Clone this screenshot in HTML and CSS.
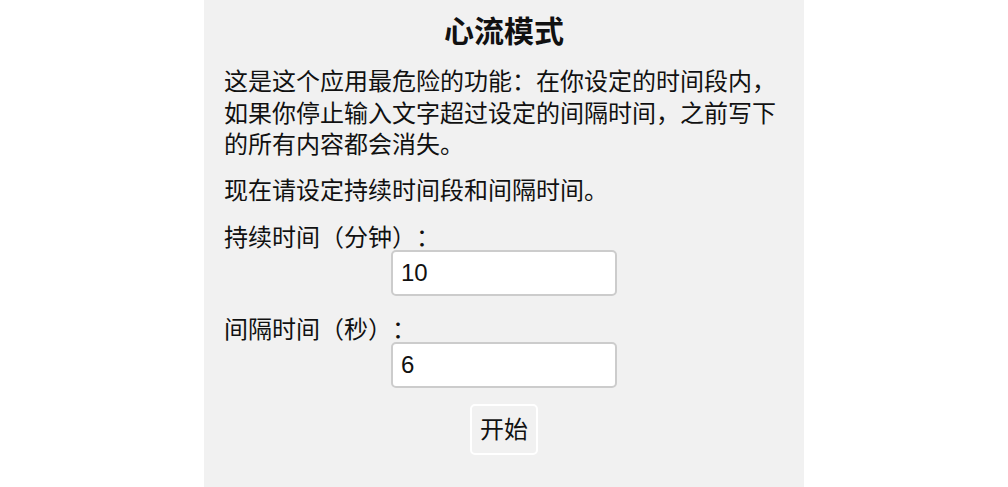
FILE: index.html
```html
<!DOCTYPE html>
<html lang="zh-CN">
<head>
<meta charset="utf-8">
<title>心流模式</title>
<link rel="stylesheet" href="styles.css">
</head>
<body>
<div class="panel">
  <h1 class="title">心流模式</h1>
  <p class="text">这是这个应用最危险的功能：在你设定的时间段内，如果你停止输入文字超过设定的间隔时间，之前写下的所有内容都会消失。</p>
  <p class="text">现在请设定持续时间段和间隔时间。</p>
  <div class="field">
    <label class="label" for="duration">持续时间（分钟）：</label>
    <input class="input" id="duration" type="text" value="10">
  </div>
  <div class="field">
    <label class="label" for="interval">间隔时间（秒）：</label>
    <input class="input" id="interval" type="text" value="6">
  </div>
  <div class="actions">
    <button class="btn" type="button">开始</button>
  </div>
</div>
</body>
</html>
```
FILE: styles.css
```css
html, body {
  margin: 0;
  padding: 0;
  background: #ffffff;
}
body {
  font-family: "Liberation Sans", "Noto Sans CJK SC", sans-serif;
  color: #111111;
  text-spacing-trim: space-all;
}
.panel {
  box-sizing: border-box;
  width: 600px;
  min-height: 100vh;
  margin: 0 auto;
  padding: 12px 20px 0 20px;
  background: #f1f1f1;
}
.title {
  margin: 0;
  font-size: 30px;
  line-height: 40px;
  font-weight: bold;
  text-align: center;
}
.text {
  margin: 14px 0 0 0;
  font-size: 24px;
  line-height: 31.5px;
}
.field {
  margin-top: 20px;
}
.field + .field {
  margin-top: 22px;
}
.label {
  display: block;
  font-size: 24px;
  line-height: 24px;
}
.input {
  display: block;
  box-sizing: border-box;
  width: 226px;
  height: 46px;
  margin: 0 auto;
  padding: 0 8px;
  border: 2px solid #cccccc;
  border-radius: 5px;
  background: #ffffff;
  font-family: "Liberation Sans", sans-serif;
  font-size: 24px;
  color: #111111;
  outline: none;
}
.actions {
  margin-top: 16px;
  text-align: center;
}
.btn {
  box-sizing: border-box;
  padding: 8px 8px;
  border: 2px solid #ffffff;
  border-radius: 5px;
  background: #f1f1f1;
  font-family: "Liberation Sans", "Noto Sans CJK SC", sans-serif;
  font-size: 24px;
  line-height: 31px;
  color: #111111;
}
```
